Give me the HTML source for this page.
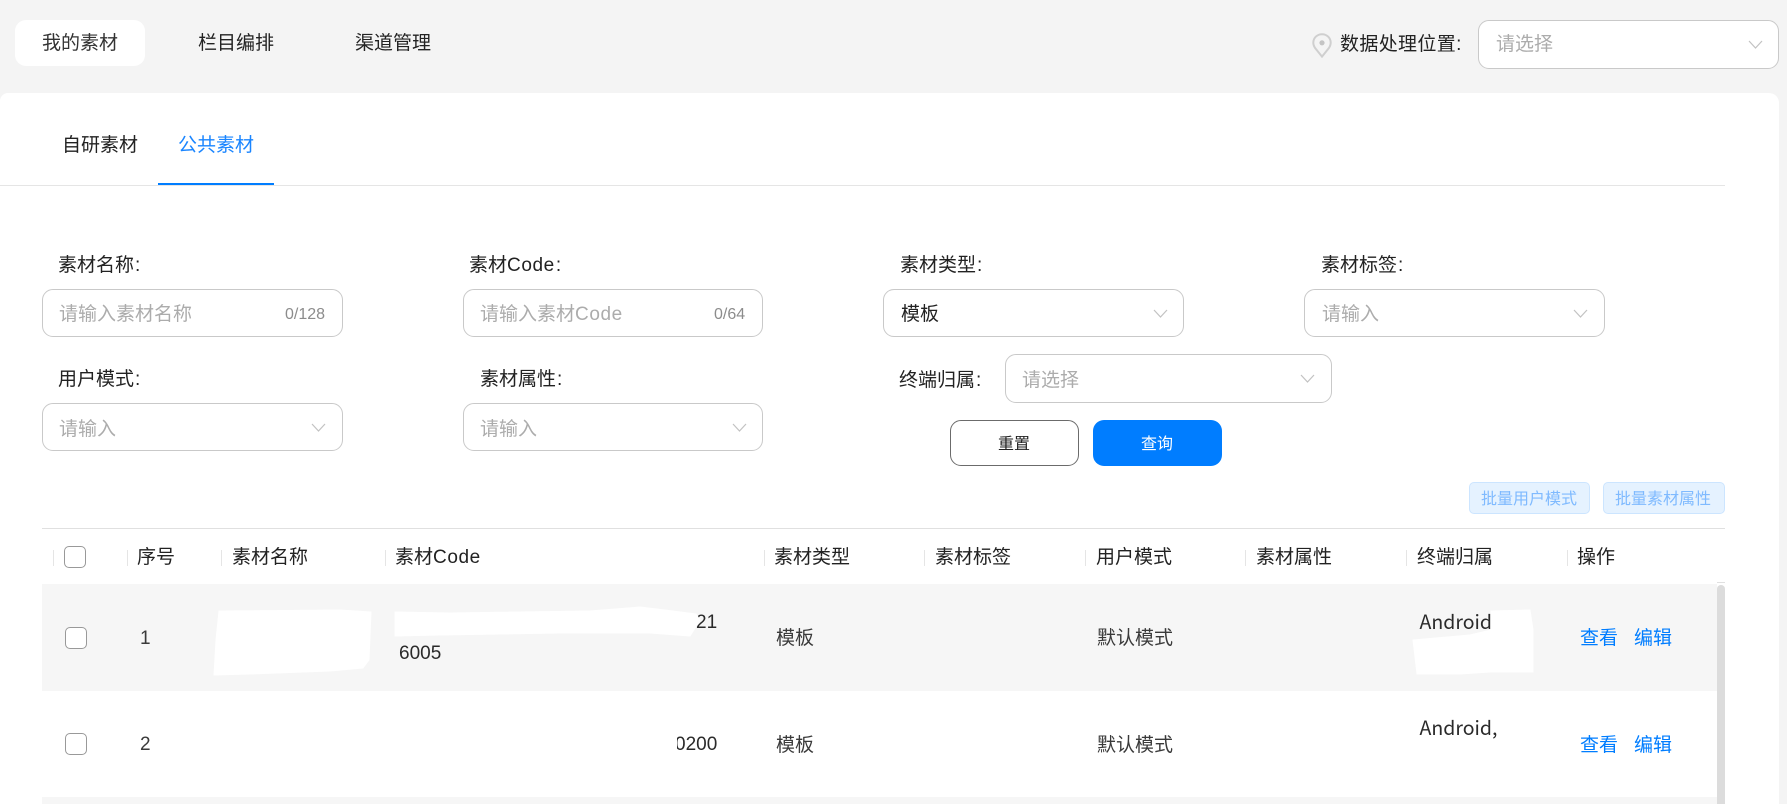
<!DOCTYPE html>
<html lang="zh-CN">
<head>
<meta charset="utf-8">
<title>我的素材</title>
<style>
html,body{margin:0;padding:0;width:1787px;height:804px;overflow:hidden;background:#f4f4f4}
body{position:relative;font-family:"Liberation Sans","Noto Sans CJK SC",sans-serif;font-size:19px;color:#222}
.a{position:absolute;white-space:nowrap}
.t{position:absolute;white-space:nowrap;height:28px;line-height:28px;margin-top:2px}
.box{position:absolute;box-sizing:border-box;background:#fff;border:1px solid #c9c9c9;border-radius:11px}
.ph{color:#acacac}
.sep{position:absolute;top:550px;width:1px;height:16px;background:#e5e5e5}
.cb{position:absolute;box-sizing:border-box;width:22px;height:22px;border:1px solid #999;border-radius:5px;background:#fff}
.cell{color:#3a3a3a}
.lnk{color:#007dff}
.n{font-family:"Noto Sans CJK SC","Liberation Sans",sans-serif;font-size:19.5px;color:#2a2a2a}
.c{letter-spacing:.6px}
.k{margin-left:1px}
svg.ch{position:absolute;width:15px;height:9px;overflow:visible}
</style>
</head>
<body>
<div class="a" style="left:15px;top:20px;width:130px;height:46px;background:#fff;border-radius:11px"></div>
<div class="t" style="left:42px;top:28px;color:#333">我的素材</div>
<div class="t" style="left:198px;top:28px">栏目编排</div>
<div class="t" style="left:355px;top:28px">渠道管理</div>

<svg class="a" style="left:1312px;top:33px" width="20" height="25" viewBox="0 0 20 25"><path d="M10 1.2C5 1.2 1.3 5 1.3 9.8c0 2 .8 3.8 2 5.5L10 23.6l6.7-8.3c1.2-1.7 2-3.5 2-5.5C18.7 5 15 1.2 10 1.2Z" fill="none" stroke="#cfcfcf" stroke-width="2"/><circle cx="10" cy="9.8" r="2.6" fill="#c4c4c4"/></svg>
<div class="t" style="left:1340px;top:29px;letter-spacing:.35px">数据处理位置:</div>
<div class="box" style="left:1478px;top:20px;width:301px;height:49px"></div>
<div class="t ph" style="left:1496px;top:29px">请选择</div>
<svg class="ch" style="left:1748px;top:40px" viewBox="0 0 15 9"><path d="M1 1l6.5 7L14 1" fill="none" stroke="#c2c2c2" stroke-width="1.2"/></svg>

<div class="a" style="left:0;top:93px;width:1779px;height:711px;background:#fff;border-top-right-radius:10px;border-top-left-radius:8px"></div>
<div class="t" style="left:62px;top:130px">自研素材</div>
<div class="t" style="left:178px;top:130px;color:#1a85ff">公共素材</div>
<div class="a" style="left:0;top:185px;width:1725px;height:1px;background:#e5e5e5"></div>
<div class="a" style="left:158px;top:183px;width:116px;height:2px;background:#007dff"></div>

<div class="t" style="left:58px;top:250px">素材名称<span class="k">:</span></div>
<div class="t" style="left:469px;top:250px">素材<span class="c">Code</span><span class="k">:</span></div>
<div class="t" style="left:900px;top:250px">素材类型<span class="k">:</span></div>
<div class="t" style="left:1321px;top:250px">素材标签<span class="k">:</span></div>

<div class="box" style="left:42px;top:289px;width:301px;height:48px"></div>
<div class="t ph" style="left:59px;top:299px">请输入素材名称</div>
<div class="t" style="left:285px;top:299px;font-size:16px;color:#8c8c8c">0/128</div>
<div class="box" style="left:463px;top:289px;width:300px;height:48px"></div>
<div class="t ph" style="left:480px;top:299px">请输入素材<span class="c">Code</span></div>
<div class="t" style="left:714px;top:299px;font-size:16px;color:#8c8c8c">0/64</div>
<div class="box" style="left:883px;top:289px;width:301px;height:48px"></div>
<div class="t" style="left:901px;top:299px">模板</div>
<svg class="ch" style="left:1153px;top:309px" viewBox="0 0 15 9"><path d="M1 1l6.5 7L14 1" fill="none" stroke="#c2c2c2" stroke-width="1.2"/></svg>
<div class="box" style="left:1304px;top:289px;width:301px;height:48px"></div>
<div class="t ph" style="left:1322px;top:299px">请输入</div>
<svg class="ch" style="left:1573px;top:309px" viewBox="0 0 15 9"><path d="M1 1l6.5 7L14 1" fill="none" stroke="#c2c2c2" stroke-width="1.2"/></svg>

<div class="t" style="left:58px;top:364px">用户模式<span class="k">:</span></div>
<div class="t" style="left:480px;top:364px">素材属性<span class="k">:</span></div>
<div class="t" style="left:899px;top:365px">终端归属<span class="k">:</span></div>

<div class="box" style="left:42px;top:403px;width:301px;height:48px"></div>
<div class="t ph" style="left:59px;top:414px">请输入</div>
<svg class="ch" style="left:311px;top:423px" viewBox="0 0 15 9"><path d="M1 1l6.5 7L14 1" fill="none" stroke="#c2c2c2" stroke-width="1.2"/></svg>
<div class="box" style="left:463px;top:403px;width:300px;height:48px"></div>
<div class="t ph" style="left:480px;top:414px">请输入</div>
<svg class="ch" style="left:732px;top:423px" viewBox="0 0 15 9"><path d="M1 1l6.5 7L14 1" fill="none" stroke="#c2c2c2" stroke-width="1.2"/></svg>
<div class="box" style="left:1005px;top:354px;width:327px;height:49px"></div>
<div class="t ph" style="left:1022px;top:365px">请选择</div>
<svg class="ch" style="left:1300px;top:374px" viewBox="0 0 15 9"><path d="M1 1l6.5 7L14 1" fill="none" stroke="#c2c2c2" stroke-width="1.2"/></svg>

<div class="box" style="left:950px;top:420px;width:129px;height:46px;border-color:#6b6b6b"></div>
<div class="t" style="left:998px;top:429px;font-size:16px;color:#222">重置</div>
<div class="a" style="left:1093px;top:420px;width:129px;height:46px;background:#007dff;border-radius:11px"></div>
<div class="t" style="left:1141px;top:429px;font-size:16px;color:#fff">查询</div>

<div class="a" style="left:1469px;top:482px;width:121px;height:32px;box-sizing:border-box;background:#e5f2ff;border:1px solid #cce5ff;border-radius:5px"></div>
<div class="t" style="left:1481px;top:484px;font-size:16px;color:#7fbaff">批量用户模式</div>
<div class="a" style="left:1603px;top:482px;width:122px;height:32px;box-sizing:border-box;background:#e5f2ff;border:1px solid #cce5ff;border-radius:5px"></div>
<div class="t" style="left:1615px;top:484px;font-size:16px;color:#7fbaff">批量素材属性</div>

<div class="a" style="left:42px;top:528px;width:1683px;height:1px;background:#e0e0e0"></div>
<div class="sep" style="left:53px"></div>
<div class="sep" style="left:127px"></div>
<div class="sep" style="left:221px"></div>
<div class="sep" style="left:385px"></div>
<div class="sep" style="left:764px"></div>
<div class="sep" style="left:924px"></div>
<div class="sep" style="left:1085px"></div>
<div class="sep" style="left:1245px"></div>
<div class="sep" style="left:1406px"></div>
<div class="sep" style="left:1567px"></div>
<div class="cb" style="left:64px;top:546px"></div>
<div class="t" style="left:137px;top:542px">序号</div>
<div class="t" style="left:232px;top:542px">素材名称</div>
<div class="t" style="left:395px;top:542px">素材<span class="c">Code</span></div>
<div class="t" style="left:774px;top:542px">素材类型</div>
<div class="t" style="left:935px;top:542px">素材标签</div>
<div class="t" style="left:1096px;top:542px">用户模式</div>
<div class="t" style="left:1256px;top:542px">素材属性</div>
<div class="t" style="left:1417px;top:542px">终端归属</div>
<div class="t" style="left:1577px;top:542px">操作</div>

<div class="a" style="left:42px;top:584px;width:1675px;height:107px;background:#f6f6f6"></div>
<div class="a" style="left:42px;top:797px;width:1675px;height:7px;background:#f6f6f6"></div>
<div class="a" style="left:1717px;top:582px;width:8px;height:1px;background:#e0e0e0"></div>
<div class="a" style="left:1717px;top:585px;width:8px;height:219px;background:#dcdcdc;border-radius:4px 4px 0 0"></div>

<div class="cb" style="left:65px;top:627px"></div>
<div class="t cell" style="left:140px;top:623px">1</div>
<div class="t cell" style="left:399px;top:638px;color:#2a2a2a">6005</div>
<div class="t cell" style="left:696px;top:607px;color:#2a2a2a">21</div>
<div class="t cell" style="left:776px;top:623px">模板</div>
<div class="t cell" style="left:1097px;top:623px">默认模式</div>
<div class="t n" style="left:1419.5px;top:605px">Android</div>
<div class="t lnk" style="left:1580px;top:623px">查看</div>
<div class="t lnk" style="left:1634px;top:623px">编辑</div>

<div class="cb" style="left:65px;top:733px"></div>
<div class="t cell" style="left:140px;top:729px">2</div>
<div class="t cell" style="left:675px;top:729px;color:#2a2a2a">0200</div>
<div class="a" style="left:660px;top:728px;width:17px;height:32px;background:#fff"></div>
<div class="t cell" style="left:776px;top:730px">模板</div>
<div class="t cell" style="left:1097px;top:730px">默认模式</div>
<div class="t n" style="left:1419.5px;top:711px">Android,</div>
<div class="t lnk" style="left:1580px;top:730px">查看</div>
<div class="t lnk" style="left:1634px;top:730px">编辑</div>

<svg class="a" style="left:0;top:0" width="1787" height="804" viewBox="0 0 1787 804">
<path d="M219 611L340 610L371 612L369 660L363 668L330 671L250 674L214 675L216 640Z" fill="#fff" stroke="#fff" stroke-width="1" stroke-linejoin="round"/>
<path d="M395 612L450 613L590 611L640 607L665 610L696 614L700 620L690 636L650 633L560 633L440 635L395 636Z" fill="#fff" stroke="#fff" stroke-width="1" stroke-linejoin="round"/>
<path d="M1491 611L1530 610L1533 630L1533 672L1490 672L1460 674L1417 674L1413 640L1470 635L1491 630Z" fill="#fff" stroke="#fff" stroke-width="1" stroke-linejoin="round"/>
</svg>
</body>
</html>
